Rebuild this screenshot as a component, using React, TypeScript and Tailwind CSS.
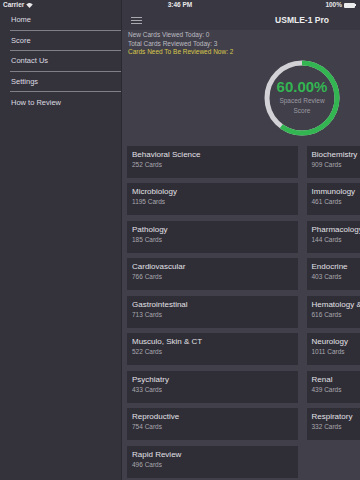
import React from "react";

const menu = ["Home", "Score", "Contact Us", "Settings", "How to Review"];

const cards: [string, string][] = [
  ["Behavioral Science", "252 Cards"],
  ["Biochemistry", "909 Cards"],
  ["Microbiology", "1195 Cards"],
  ["Immunology", "461 Cards"],
  ["Pathology", "185 Cards"],
  ["Pharmacology", "144 Cards"],
  ["Cardiovascular", "766 Cards"],
  ["Endocrine", "403 Cards"],
  ["Gastrointestinal", "713 Cards"],
  ["Hematology & Oncology", "616 Cards"],
  ["Musculo, Skin & CT", "522 Cards"],
  ["Neurology", "1011 Cards"],
  ["Psychiatry", "433 Cards"],
  ["Renal", "439 Cards"],
  ["Reproductive", "754 Cards"],
  ["Respiratory", "332 Cards"],
  ["Rapid Review", "496 Cards"],
];

function Ring() {
  const r = 35;
  const c = 2 * Math.PI * r;
  return (
    <div className="relative w-[76px] h-[76px]">
      <svg width="76" height="76" viewBox="0 0 76 76" className="absolute inset-0">
        <circle cx="38" cy="38" r={r} fill="none" stroke="#d2d1d6" strokeWidth="5" />
        <circle
          cx="38"
          cy="38"
          r={r}
          fill="none"
          stroke="#33b552"
          strokeWidth="5"
          strokeDasharray={`${c * 0.6} ${c}`}
          transform="rotate(-90 38 38)"
        />
      </svg>
      <div className="absolute inset-0 flex flex-col items-center justify-center">
        <div className="text-[15px] leading-[16px] font-bold text-[#33b552] mt-[-1px]">60.00%</div>
        <div className="text-[6.5px] leading-[10px] text-[#9c9aa3] mt-[1px]">Spaced Review</div>
        <div className="text-[6.5px] leading-[10px] text-[#9c9aa3]">Score</div>
      </div>
    </div>
  );
}

export default function App() {
  return (
    <div
      className="relative w-[360px] h-[480px] overflow-hidden flex bg-[#34323b]"
      style={{ fontFamily: '"Liberation Sans", Arial, sans-serif' }}
    >
      {/* status bar */}
      <div className="absolute top-0 left-0 right-0 h-[10px] flex items-center px-[3px] text-[6.5px] font-bold text-[#e8e8ea] z-10">
        <div className="flex items-center gap-[2px] w-[120px]">
          <span>Carrier</span>
          <svg width="7" height="5" viewBox="0 0 14 10">
            <path d="M7 10 L0.5 3 A9.5 9.5 0 0 1 13.5 3 Z" fill="#e8e8ea" />
          </svg>
        </div>
        <div className="flex-1 text-center">3:46 PM</div>
        <div className="w-[120px] flex items-center justify-end gap-[2px] pr-[1px]">
          <span>100%</span>
          <div className="flex items-center">
            <div className="w-[11px] h-[5px] rounded-[1px] bg-[#ececee]" />
            <div className="w-[1px] h-[2px] bg-[#ececee]" />
          </div>
        </div>
      </div>

      {/* sidebar */}
      <div className="w-[122px] shrink-0 bg-[#34323b] pt-[10px] border-r border-[#2a2830]">
        {menu.map((m, i) => (
          <div key={m} className="pl-[10px]">
            <div
              className={`h-[20.5px] flex items-center pl-[1px] text-[7.5px] text-[#dddce0] ${
                i < menu.length - 1 ? "border-b border-[#807e87]" : ""
              }`}
            >
              {m}
            </div>
          </div>
        ))}
      </div>

      {/* main */}
      <div className="w-[360px] shrink-0 bg-[#413f49] flex flex-col">
        <div className="h-[30px] bg-[#393741] relative flex items-center pt-[10px]">
          <div className="ml-[9px] flex flex-col gap-[2px]">
            <div className="w-[11px] h-[1px] bg-[#a9a8ae]" />
            <div className="w-[11px] h-[1px] bg-[#a9a8ae]" />
            <div className="w-[11px] h-[1px] bg-[#a9a8ae]" />
          </div>
          <div className="absolute left-0 right-0 top-[10px] h-[20px] flex items-center justify-center text-[8.5px] font-semibold text-[#ececee]">
            USMLE-1 Pro
          </div>
        </div>
        <div className="pl-[6px] pt-[1px] text-[6.5px] leading-[8.5px] text-[#bdbcc2]">
          <div>New Cards Viewed Today: 0</div>
          <div>Total Cards Reviewed Today: 3</div>
          <div className="text-[#d8c84c]">Cards Need To Be Reviewed Now: 2</div>
        </div>
        <div className="flex justify-center mt-[3px] pl-[0px]">
          <Ring />
        </div>
        <div className="grid grid-cols-2 gap-x-[9px] gap-y-[5.5px] px-[5px] mt-[10px]">
          {cards.map(([t, n]) => (
            <div key={t} className="h-[32px] bg-[#2f2d36] pl-[5px] pt-[4px] whitespace-nowrap overflow-hidden">
              <div className="text-[8px] leading-[10px] text-[#e2e1e6]">{t}</div>
              <div className="text-[6.5px] leading-[9px] text-[#a9a8ae]">{n}</div>
            </div>
          ))}
        </div>
      </div>
    </div>
  );
}
